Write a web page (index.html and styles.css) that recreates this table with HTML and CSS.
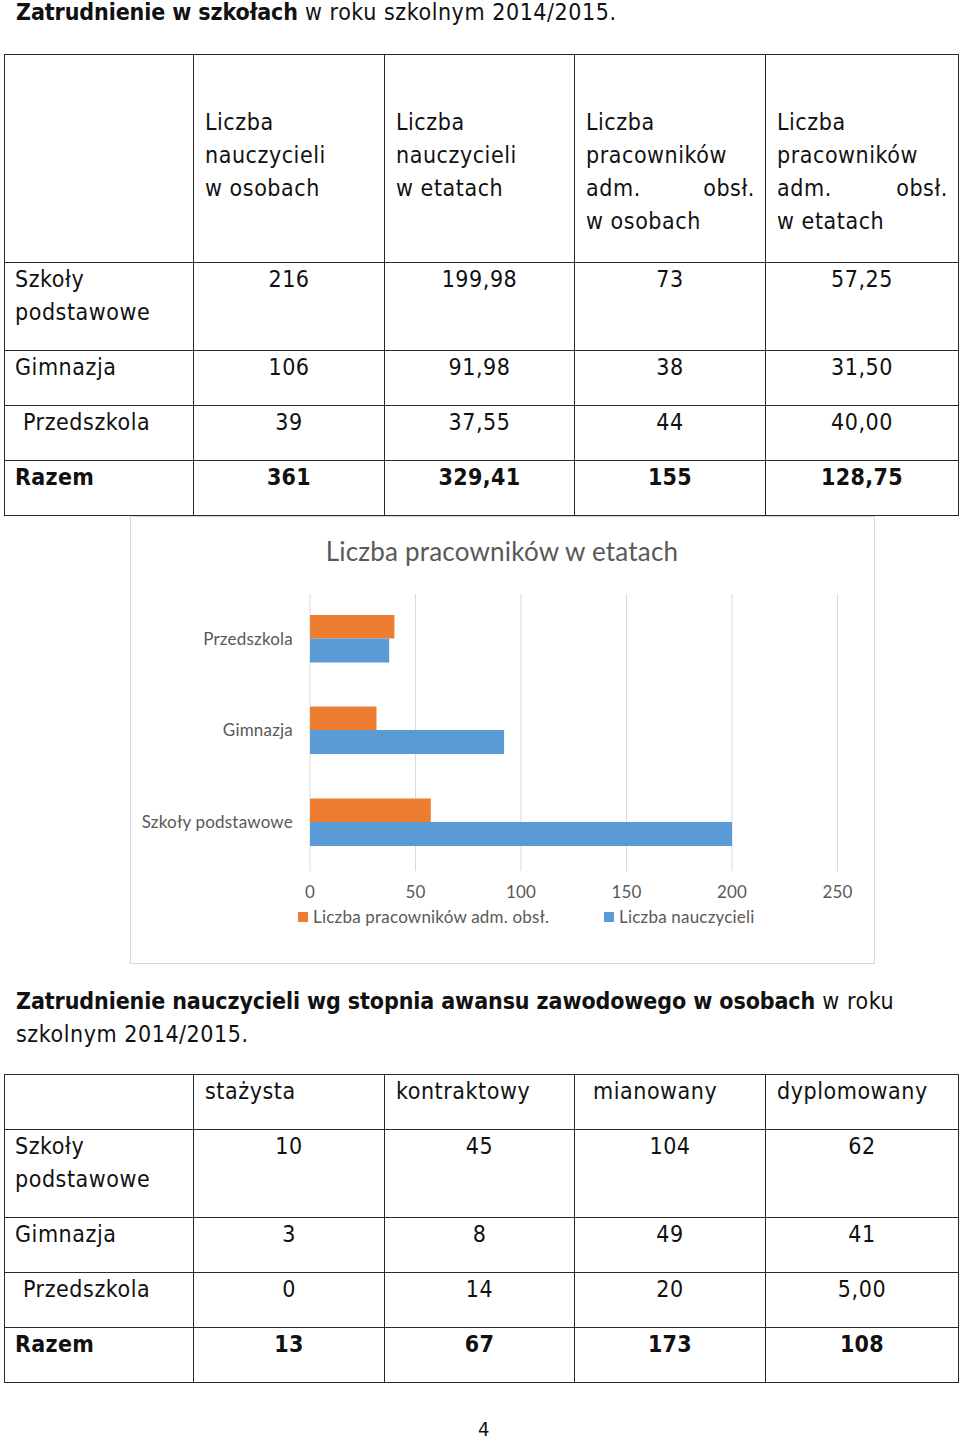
FILE: index.html
```html
<!DOCTYPE html>
<html lang="pl">
<head>
<meta charset="utf-8">
<title>Zatrudnienie w szkołach</title>
<link rel="stylesheet" href="styles.css">
</head>
<body>
<h1 class="heading heading-first"><b>Zatrudnienie w szkołach</b> w roku szkolnym 2014/2015.</h1>

<table class="grid grid-one">
  <colgroup>
    <col class="c1"><col class="c2"><col class="c3"><col class="c4"><col class="c5">
  </colgroup>
  <tr class="row-head">
    <td></td>
    <td class="th"><span class="ln">Liczba</span><span class="ln">nauczycieli</span><span class="ln">w osobach</span></td>
    <td class="th"><span class="ln">Liczba</span><span class="ln">nauczycieli</span><span class="ln">w etatach</span></td>
    <td class="th"><span class="ln">Liczba</span><span class="ln">pracowników</span><span class="ln jst"><span>adm.</span><span>obsł.</span></span><span class="ln">w osobach</span></td>
    <td class="th"><span class="ln">Liczba</span><span class="ln">pracowników</span><span class="ln jst"><span>adm.</span><span>obsł.</span></span><span class="ln">w etatach</span></td>
  </tr>
  <tr>
    <td class="lbl">Szkoły podstawowe</td>
    <td class="num">216</td><td class="num">199,98</td><td class="num">73</td><td class="num">57,25</td>
  </tr>
  <tr>
    <td class="lbl">Gimnazja</td>
    <td class="num">106</td><td class="num">91,98</td><td class="num">38</td><td class="num">31,50</td>
  </tr>
  <tr>
    <td class="lbl indent">Przedszkola</td>
    <td class="num">39</td><td class="num">37,55</td><td class="num">44</td><td class="num">40,00</td>
  </tr>
  <tr class="total">
    <td class="lbl">Razem</td>
    <td class="num">361</td><td class="num">329,41</td><td class="num">155</td><td class="num">128,75</td>
  </tr>
</table>

<div class="chart">
  <svg class="chart-svg" viewBox="131 516 743 446" width="743" height="446" xmlns="http://www.w3.org/2000/svg">
    <text class="ch-title" x="502" y="560" text-anchor="middle">Liczba pracowników w etatach</text>
    <g class="gridlines">
      <line x1="310" y1="593" x2="310" y2="870"/>
      <line x1="415.5" y1="593" x2="415.5" y2="870"/>
      <line x1="521" y1="593" x2="521" y2="870"/>
      <line x1="626.5" y1="593" x2="626.5" y2="870"/>
      <line x1="732" y1="593" x2="732" y2="870"/>
      <line x1="837.5" y1="593" x2="837.5" y2="870"/>
    </g>
    <rect class="bar-o" x="310" y="614" width="84.4" height="23.5"/>
    <rect class="bar-b" x="310" y="637.5" width="79.2" height="24"/>
    <rect class="bar-o" x="310" y="705.5" width="66.5" height="23.5"/>
    <rect class="bar-b" x="310" y="729" width="194.1" height="24"/>
    <rect class="bar-o" x="310" y="797.5" width="120.8" height="23.5"/>
    <rect class="bar-b" x="310" y="821" width="422" height="24"/>
    <g class="cat">
      <text x="293" y="644" text-anchor="end">Przedszkola</text>
      <text x="293" y="735" text-anchor="end">Gimnazja</text>
      <text x="293" y="827" text-anchor="end">Szkoły podstawowe</text>
    </g>
    <g class="axis">
      <text x="310" y="897" text-anchor="middle">0</text>
      <text x="415.5" y="897" text-anchor="middle">50</text>
      <text x="521" y="897" text-anchor="middle">100</text>
      <text x="626.5" y="897" text-anchor="middle">150</text>
      <text x="732" y="897" text-anchor="middle">200</text>
      <text x="837.5" y="897" text-anchor="middle">250</text>
    </g>
    <g class="legend">
      <rect class="bar-o" x="298" y="911" width="10" height="10"/>
      <text x="313" y="922">Liczba pracowników adm. obsł.</text>
      <rect class="bar-b" x="604" y="911" width="10" height="10"/>
      <text x="619" y="922">Liczba nauczycieli</text>
    </g>
  </svg>
</div>

<h2 class="heading heading-second"><b>Zatrudnienie nauczycieli wg stopnia awansu zawodowego w osobach</b> w roku szkolnym 2014/2015.</h2>

<table class="grid grid-two">
  <colgroup>
    <col class="c1"><col class="c2"><col class="c3"><col class="c4"><col class="c5">
  </colgroup>
  <tr class="row-head2">
    <td></td>
    <td class="th2">stażysta</td>
    <td class="th2">kontraktowy</td>
    <td class="th2 th2-m">mianowany</td>
    <td class="th2">dyplomowany</td>
  </tr>
  <tr>
    <td class="lbl">Szkoły podstawowe</td>
    <td class="num">10</td><td class="num">45</td><td class="num">104</td><td class="num">62</td>
  </tr>
  <tr>
    <td class="lbl">Gimnazja</td>
    <td class="num">3</td><td class="num">8</td><td class="num">49</td><td class="num">41</td>
  </tr>
  <tr>
    <td class="lbl indent">Przedszkola</td>
    <td class="num">0</td><td class="num">14</td><td class="num">20</td><td class="num">5,00</td>
  </tr>
  <tr class="total">
    <td class="lbl">Razem</td>
    <td class="num">13</td><td class="num">67</td><td class="num">173</td><td class="num">108</td>
  </tr>
</table>

<div class="page-num">4</div>
</body>
</html>
```

FILE: styles.css
```css
html, body {
  margin: 0;
  padding: 0;
  background: #ffffff;
}

body {
  width: 960px;
  font-family: "DejaVu Sans Condensed", "DejaVu Sans", sans-serif;
  font-stretch: condensed;
  font-size: 23px;
  letter-spacing: 0.55px;
  line-height: 33px;
  color: #111111;
}

.heading {
  margin: 0;
  padding-left: 16px;
  padding-right: 30px;
  font-size: 23px;
  font-weight: normal;
  line-height: 33px;
}

.heading b {
  font-weight: bold;
  letter-spacing: -0.1px;
}

.heading-first {
  margin-top: -4px;
}

.heading-second {
  margin-top: 21px;
}

.grid {
  border-collapse: collapse;
  table-layout: fixed;
  width: 954px;
  margin-left: 4px;
}

.grid-one {
  margin-top: 25px;
}

.grid-two {
  margin-top: 23px;
}

.c1 { width: 189px; }
.c2 { width: 191px; }
.c3 { width: 190px; }
.c4 { width: 191px; }
.c5 { width: 193px; }

.grid td {
  border: 1px solid #2a2a2a;
  vertical-align: top;
  padding: 0 10px 21px 10px;
}

.row-head td {
  padding-top: 51px;
  padding-bottom: 24px;
}

.th {
  padding-left: 11px !important;
}

.ln {
  display: block;
}

.jst {
  display: flex;
  justify-content: space-between;
}

.num {
  text-align: center;
}

.lbl.indent {
  padding-left: 18px;
}

.total td {
  font-weight: bold;
  letter-spacing: 0.35px;
}

.th2 {
  padding-left: 11px !important;
}

.th2-m {
  padding-left: 18px !important;
}

.chart {
  margin-top: 0;
  margin-left: 130px;
  width: 743px;
  height: 446px;
  border: 1px solid #d6d6d6;
}

.chart-svg {
  display: block;
  font-family: Lato, "Open Sans", sans-serif;
  letter-spacing: 0.2px;
}

.ch-title {
  font-size: 26px;
  fill: #595959;
}

.gridlines line {
  stroke: #d9d9d9;
  stroke-width: 1;
}

.bar-o {
  fill: #ed7d31;
}

.bar-b {
  fill: #5b9bd5;
}

.cat text,
.axis text,
.legend text {
  font-size: 17px;
  fill: #595959;
}

.page-num {
  margin-top: 34px;
  padding-left: 478px;
  font-size: 20px;
  line-height: 24px;
  letter-spacing: 0;
}
```
